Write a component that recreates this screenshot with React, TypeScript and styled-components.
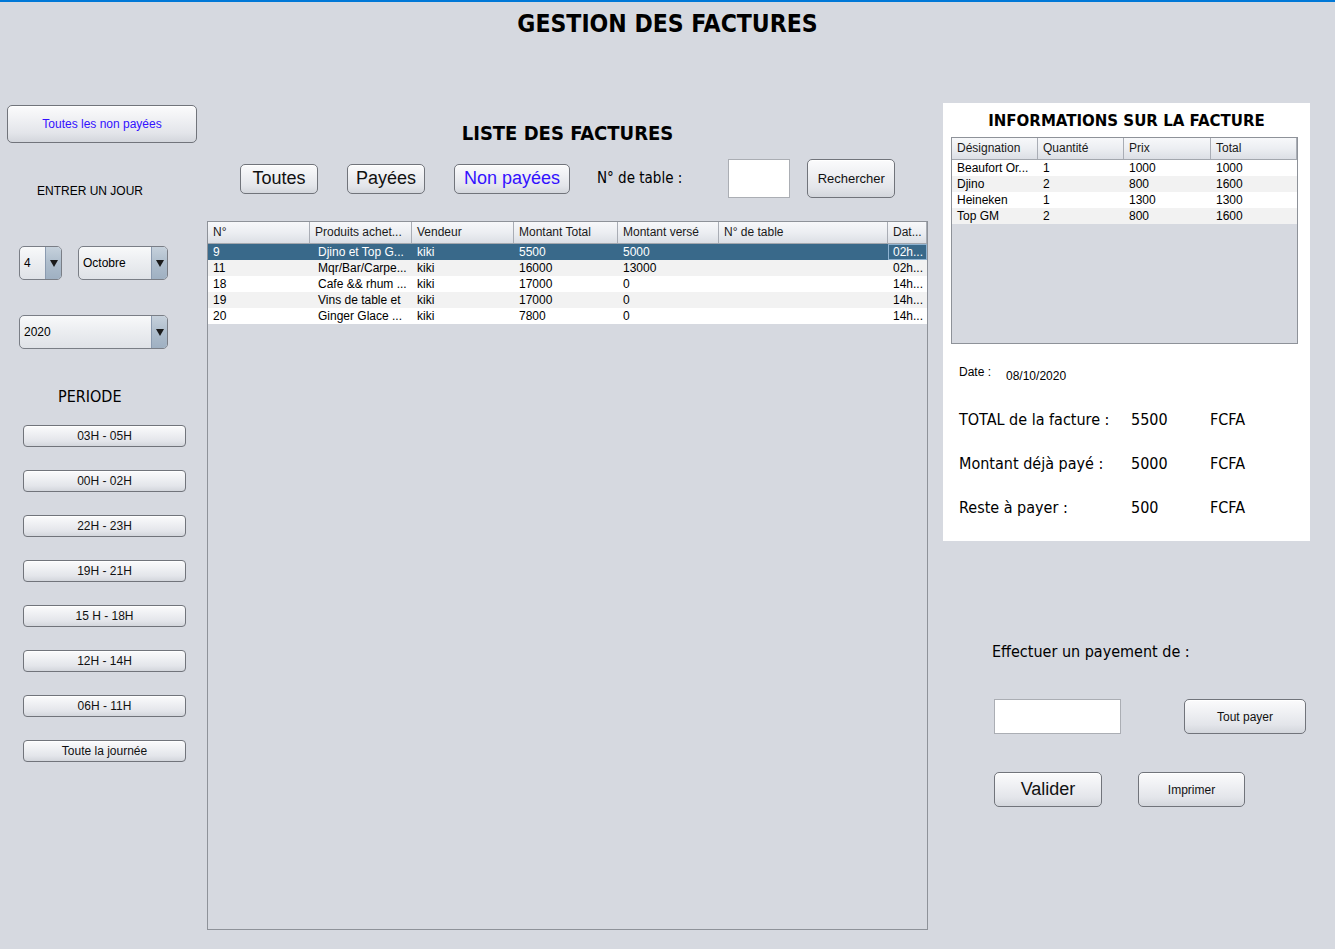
import React from 'react'
import styled, { createGlobalStyle } from 'styled-components'

const GlobalStyle = createGlobalStyle`
  html, body { margin: 0; padding: 0; background: #d6d9e0; }
  * { box-sizing: border-box; }
`

const TAHOMA = `"DejaVu Sans Condensed", "DejaVu Sans", Tahoma, sans-serif`

const Window = styled.div`
  width: 1335px;
  height: 949px;
  overflow: hidden;
  border-top: 2px solid #0078d7;
  background: #d6d9e0;
  font-family: "Liberation Sans", Arial, sans-serif;
  color: #000;
`

const Title = styled.h1`
  margin: 0;
  height: 42px;
  line-height: 44px;
  text-align: center;
  font-family: ${TAHOMA};
  font-weight: bold;
  font-size: 24.5px;
`

const Main = styled.div`
  display: flex;
  align-items: flex-start;
  margin-top: 59px;
`

const LeftColumn = styled.div`
  width: 207px;
  padding-top: 2px;
  display: flex;
  flex-direction: column;
`

const MiddleColumn = styled.div`
  width: 721px;
  display: flex;
  flex-direction: column;
`

const RightColumn = styled.div`
  width: 367px;
  margin-left: 15px;
  display: flex;
  flex-direction: column;
`

const Button = styled.button<{ $w: number; $h: number; $size?: number; $blue?: boolean; $radius?: number }>`
  width: ${({ $w }) => $w}px;
  height: ${({ $h }) => $h}px;
  padding: 0;
  flex-shrink: 0;
  border: 1px solid #71747b;
  border-radius: ${({ $radius }) => $radius ?? 5}px;
  background: linear-gradient(to bottom, #fbfbfc 0%, #f0f1f4 35%, #e3e5ea 75%, #d3d6dc 100%);
  box-shadow: inset 0 1px 0 #ffffff;
  font-family: "Liberation Sans", Arial, sans-serif;
  font-size: ${({ $size }) => $size ?? 12}px;
  color: ${({ $blue }) => ($blue ? '#3311ff' : '#111')};
  cursor: pointer;
`

const Label = styled.div<{ $size?: number; $left?: number; $top?: number; $tahoma?: boolean }>`
  margin-top: ${({ $top }) => $top ?? 0}px;
  margin-left: ${({ $left }) => $left ?? 0}px;
  font-family: ${({ $tahoma }) => ($tahoma ? TAHOMA : `"Liberation Sans", Arial, sans-serif`)};
  font-size: ${({ $size }) => $size ?? 12}px;
  line-height: ${({ $size }) => Math.round(($size ?? 12) * 1.25)}px;
  white-space: nowrap;
`

const ComboRow = styled.div<{ $top: number }>`
  display: flex;
  gap: 16px;
  margin-top: ${({ $top }) => $top}px;
  margin-left: 19px;
`

const Combo = styled.div<{ $w: number }>`
  width: ${({ $w }) => $w}px;
  height: 34px;
  display: flex;
  border: 1px solid #7a7e86;
  border-radius: 5px;
  overflow: hidden;
  background: linear-gradient(to bottom, #f8f9fa 0%, #eceef1 45%, #dfe2e7 100%);
  font-size: 12px;
`

const ComboValue = styled.div`
  flex: 1;
  display: flex;
  align-items: center;
  padding-left: 4px;
`

const ComboArrow = styled.div`
  width: 16px;
  display: flex;
  align-items: center;
  justify-content: center;
  border-left: 1px solid #8b9bb0;
  background: linear-gradient(to bottom, #c6d1dc 0%, #aebdcc 50%, #9fb0c2 100%);
  &::after {
    content: '';
    border-left: 4px solid transparent;
    border-right: 4px solid transparent;
    border-top: 7px solid #1a1a1a;
  }
`

const PeriodList = styled.div`
  display: flex;
  flex-direction: column;
  gap: 23px;
  margin-top: 18px;
  margin-left: 23px;
`

const SectionTitle = styled.div<{ $size: number; $top: number }>`
  margin-top: ${({ $top }) => $top}px;
  text-align: center;
  font-family: ${TAHOMA};
  font-weight: bold;
  font-size: ${({ $size }) => $size}px;
  line-height: ${({ $size }) => Math.round($size * 1.3)}px;
`

const Toolbar = styled.div`
  display: flex;
  align-items: center;
  height: 39px;
  margin-top: 13px;
  padding-left: 33px;
`

const Gap = styled.div<{ $w: number }>`
  width: ${({ $w }) => $w}px;
  flex-shrink: 0;
`

const TextField = styled.div<{ $w: number; $h: number }>`
  width: ${({ $w }) => $w}px;
  height: ${({ $h }) => $h}px;
  flex-shrink: 0;
  background: #fff;
  border: 1px solid #abaeb4;
`

const Table = styled.div<{ $w: number; $h: number; $top: number; $left?: number }>`
  width: ${({ $w }) => $w}px;
  height: ${({ $h }) => $h}px;
  margin-top: ${({ $top }) => $top}px;
  margin-left: ${({ $left }) => $left ?? 0}px;
  border: 1px solid #8e9299;
  background: #d6d9e0;
  overflow: hidden;
  font-size: 12px;
`

const Row = styled.div<{ $cols: string; $bg?: string; $selected?: boolean }>`
  display: grid;
  grid-template-columns: ${({ $cols }) => $cols};
  height: 16px;
  line-height: 16px;
  background: ${({ $selected, $bg }) => ($selected ? '#39698a' : $bg ?? '#fff')};
  color: ${({ $selected }) => ($selected ? '#fff' : '#000')};
`

const HeaderRow = styled(Row)`
  height: 22px;
  line-height: 21px;
  background: linear-gradient(to bottom, #f7f8fa 0%, #eceef2 50%, #dcdfe5 100%);
  border-bottom: 1px solid #a3a7ae;
  color: #1a1a1a;
`

const HeaderCell = styled.div`
  padding-left: 5px;
  border-right: 1px solid #a9adb5;
  white-space: nowrap;
  overflow: hidden;
`

const Cell = styled.div<{ $pad?: number; $focus?: boolean }>`
  padding-left: ${({ $pad }) => $pad ?? 5}px;
  white-space: nowrap;
  overflow: hidden;
  ${({ $focus }) => ($focus ? 'box-shadow: inset 0 0 0 1px #8fb3d1;' : '')}
`

const InfoPanel = styled.div`
  height: 438px;
  background: #fff;
  display: flex;
  flex-direction: column;
`

const DateRow = styled.div`
  display: flex;
  align-items: flex-start;
  margin-top: 21px;
  margin-left: 16px;
  font-size: 12px;
  line-height: 14px;
`

const DateValue = styled.span`
  margin-left: 15px;
  margin-top: 4px;
`

const Sums = styled.div`
  display: grid;
  grid-template-columns: 172px 79px auto;
  row-gap: 24px;
  margin-top: 27px;
  margin-left: 16px;
  font-family: ${TAHOMA};
  font-size: 16px;
  line-height: 20px;
`

const ActionRow = styled.div<{ $top: number; $gap: number }>`
  display: flex;
  gap: ${({ $gap }) => $gap}px;
  margin-top: ${({ $top }) => $top}px;
  margin-left: 51px;
`

const mainCols = '102px 102px 102px 104px 101px 169px 39px'
const infoCols = '86px 86px 87px 86px'

const invoices = [
  { n: '9', p: 'Djino et Top G...', v: 'kiki', t: '5500', r: '5000', d: '02h...' },
  { n: '11', p: 'Mqr/Bar/Carpe...', v: 'kiki', t: '16000', r: '13000', d: '02h...' },
  { n: '18', p: 'Cafe && rhum ...', v: 'kiki', t: '17000', r: '0', d: '14h...' },
  { n: '19', p: 'Vins de table et', v: 'kiki', t: '17000', r: '0', d: '14h...' },
  { n: '20', p: 'Ginger Glace ...', v: 'kiki', t: '7800', r: '0', d: '14h...' },
]

const lines = [
  ['Beaufort Or...', '1', '1000', '1000'],
  ['Djino', '2', '800', '1600'],
  ['Heineken', '1', '1300', '1300'],
  ['Top GM', '2', '800', '1600'],
]

const periods = ['03H - 05H', '00H - 02H', '22H - 23H', '19H - 21H', '15 H - 18H', '12H - 14H', '06H - 11H', 'Toute la journée']

const stripe = (i: number) => (i % 2 === 1 ? '#f2f2f2' : '#fff')

export default function App() {
  return (
    <Window>
      <GlobalStyle />
      <Title>GESTION DES FACTURES</Title>
      <Main>
        <LeftColumn>
          <Button $w={190} $h={38} $blue style={{ marginLeft: 7 }}>Toutes les non payées</Button>
          <Label $top={41} $left={37}>ENTRER UN JOUR</Label>
          <ComboRow $top={47}>
            <Combo $w={43}>
              <ComboValue>4</ComboValue>
              <ComboArrow />
            </Combo>
            <Combo $w={90}>
              <ComboValue>Octobre</ComboValue>
              <ComboArrow />
            </Combo>
          </ComboRow>
          <ComboRow $top={35}>
            <Combo $w={149}>
              <ComboValue>2020</ComboValue>
              <ComboArrow />
            </Combo>
          </ComboRow>
          <Label $tahoma $size={16} $top={38} $left={58}>PERIODE</Label>
          <PeriodList>
            {periods.map((p) => (
              <Button key={p} $w={163} $h={22} $radius={4}>{p}</Button>
            ))}
          </PeriodList>
        </LeftColumn>

        <MiddleColumn>
          <SectionTitle $size={20} $top={17}>LISTE DES FACTURES</SectionTitle>
          <Toolbar>
            <Button $w={78} $h={30} $size={18}>Toutes</Button>
            <Gap $w={29} />
            <Button $w={78} $h={30} $size={18}>Payées</Button>
            <Gap $w={29} />
            <Button $w={116} $h={30} $size={18} $blue>Non payées</Button>
            <Gap $w={27} />
            <Label $tahoma $size={15}>N° de table :</Label>
            <Gap $w={46} />
            <TextField $w={62} $h={39} />
            <Gap $w={17} />
            <Button $w={88} $h={39} $size={13}>Rechercher</Button>
          </Toolbar>
          <Table $w={721} $h={709} $top={23}>
            <HeaderRow $cols={mainCols}>
              {['N°', 'Produits achet...', 'Vendeur', 'Montant Total', 'Montant versé', 'N° de table', 'Dat...'].map((h) => (
                <HeaderCell key={h}>{h}</HeaderCell>
              ))}
            </HeaderRow>
            {invoices.map((f, i) => (
              <Row key={f.n} $cols={mainCols} $selected={i === 0} $bg={stripe(i)}>
                <Cell>{f.n}</Cell>
                <Cell $pad={8}>{f.p}</Cell>
                <Cell>{f.v}</Cell>
                <Cell>{f.t}</Cell>
                <Cell>{f.r}</Cell>
                <Cell />
                <Cell $focus={i === 0}>{f.d}</Cell>
              </Row>
            ))}
          </Table>
        </MiddleColumn>

        <RightColumn>
          <InfoPanel>
            <SectionTitle $size={16.7} $top={6}>INFORMATIONS SUR LA FACTURE</SectionTitle>
            <Table $w={347} $h={207} $top={6} $left={8}>
              <HeaderRow $cols={infoCols}>
                {['Désignation', 'Quantité', 'Prix', 'Total'].map((h) => (
                  <HeaderCell key={h}>{h}</HeaderCell>
                ))}
              </HeaderRow>
              {lines.map((l, i) => (
                <Row key={l[0]} $cols={infoCols} $bg={stripe(i)}>
                  {l.map((c, j) => (
                    <Cell key={j}>{c}</Cell>
                  ))}
                </Row>
              ))}
            </Table>
            <DateRow>
              <span>Date :</span>
              <DateValue>08/10/2020</DateValue>
            </DateRow>
            <Sums>
              <span>TOTAL de la facture :</span>
              <span>5500</span>
              <span>FCFA</span>
              <span>Montant déjà payé :</span>
              <span>5000</span>
              <span>FCFA</span>
              <span>Reste à payer :</span>
              <span>500</span>
              <span>FCFA</span>
            </Sums>
          </InfoPanel>
          <Label $tahoma $size={16} $top={101} $left={49}>Effectuer un payement de :</Label>
          <ActionRow $top={37} $gap={63}>
            <TextField $w={127} $h={35} />
            <Button $w={122} $h={35}>Tout payer</Button>
          </ActionRow>
          <ActionRow $top={38} $gap={36}>
            <Button $w={108} $h={35} $size={18}>Valider</Button>
            <Button $w={107} $h={35}>Imprimer</Button>
          </ActionRow>
        </RightColumn>
      </Main>
    </Window>
  )
}
